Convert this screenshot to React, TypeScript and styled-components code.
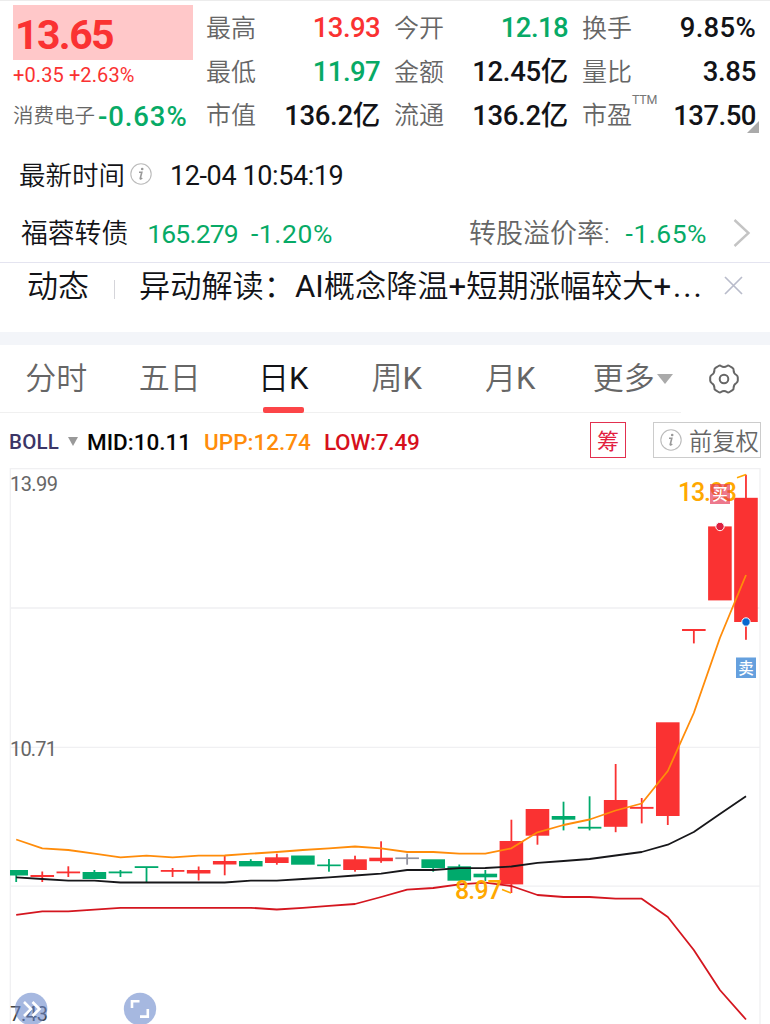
import React from "react";
import styled, { createGlobalStyle } from "styled-components";

const RED = "#fa3232";
const GREEN = "#07aa66";
const INK = "#121317";
const GREY = "#666666";
const ORANGE = "#ffa800";

const GlobalStyle = createGlobalStyle`
  * { box-sizing: border-box; }
  body {
    margin: 0;
    background: #fff;
    color: ${INK};
    font-family: Roboto, "Noto Sans CJK SC", sans-serif;
    overflow: hidden;
  }
  svg { display: block; }
`;

const Page = styled.main`
  width: 770px;
  height: 1024px;
  overflow: hidden;
  background: #fff;
  display: flex;
  flex-direction: column;
`;

const Txt = styled.span<{
  $size: number;
  $color?: string;
  $weight?: number;
  $track?: number;
}>`
  font-size: ${(p) => p.$size}px;
  color: ${(p) => p.$color ?? INK};
  font-weight: ${(p) => p.$weight ?? 400};
  letter-spacing: ${(p) => p.$track ?? 0}px;
  line-height: 1;
  white-space: nowrap;
`;

const Latin = styled.span`
  font-weight: 400;
`;

const Quote = styled.section`
  display: grid;
  grid-template-columns: 180px 550px;
  column-gap: 13px;
  height: 144px;
  flex: none;
  padding: 4px 14px 0 13px;
  border-top: 1px solid #ececec;
`;

const PriceBlock = styled.div`
  display: flex;
  flex-direction: column;
`;

const PriceBox = styled.div`
  height: 55px;
  padding: 5px 0 0 2px;
  display: flex;
  align-items: center;
  background: #ffc8c9;
`;

const ChangeLine = styled.div`
  height: 30px;
  display: flex;
  align-items: center;
`;

const SectorLine = styled.div`
  height: 50px;
  padding-top: 3px;
  display: flex;
  align-items: center;
  gap: 3px;
`;

const Stats = styled.div`
  display: grid;
  grid-template-columns: repeat(3, 174px);
  grid-template-rows: 44px 44px 43px;
  column-gap: 14px;
  padding-top: 1px;
`;

const Stat = styled.div`
  position: relative;
  display: flex;
  align-items: center;
  justify-content: space-between;
`;

const Ttm = styled.sup`
  position: absolute;
  left: 50px;
  top: 0;
  font-size: 12.5px;
  letter-spacing: -0.2px;
  line-height: 1;
  color: #777;
`;

const Corner = styled.i`
  position: absolute;
  right: -3px;
  bottom: 4px;
  border-left: 12px solid transparent;
  border-bottom: 12px solid #aaa;
`;

const TimeRow = styled.section`
  height: 62px;
  flex: none;
  display: flex;
  align-items: center;
  padding: 2px 0 0 19px;
`;

const TimeInfo = styled.div`
  margin: -4px 0 0 5px;
`;

const Stamp = styled.div`
  margin-left: 18px;
  display: flex;
`;

const BondRow = styled.section`
  height: 57px;
  flex: none;
  display: flex;
  align-items: center;
  padding: 1px 19px 0 21px;
  border-bottom: 1px solid #e4e4f0;
`;

const BondQuote = styled.div`
  display: flex;
  gap: 13px;
  margin-left: 19px;
`;

const Premium = styled.div`
  display: flex;
  align-items: center;
  gap: 16px;
  margin-left: auto;
`;

const Chevron = styled.div`
  margin: -4px 0 0 10px;
`;

const News = styled.section`
  height: 69px;
  flex: none;
  display: flex;
  align-items: flex-start;
  padding: 8px 27px 0 27px;
`;

const NewsDivider = styled.i`
  width: 1px;
  height: 19px;
  margin: 9px 24px 0 25px;
  background: #d5d5da;
`;

const Ellipsis = styled.span`
  margin-left: 2px;
  letter-spacing: 2px;
`;

const NewsClose = styled.div`
  margin: 5px 0 0 auto;
`;

const Band = styled.div`
  height: 13px;
  flex: none;
  background: #f3f5f9;
`;

const Tabs = styled.nav`
  height: 68px;
  flex: none;
  display: flex;
`;

const TabList = styled.div`
  width: 681px;
  display: grid;
  grid-template-columns: repeat(6, 113.5px);
  border-bottom: 1px solid #f0f0f0;
`;

const Tab = styled.div<{ $active?: boolean }>`
  position: relative;
  display: flex;
  align-items: center;
  justify-content: center;
  font-size: 31px;
  line-height: 1;
  color: ${(p) => (p.$active ? INK : GREY)};
  font-weight: 350;
  padding: 0 1px 0 0;
  &::after {
    content: "";
    display: ${(p) => (p.$active ? "block" : "none")};
    position: absolute;
    left: 36px;
    bottom: -1px;
    width: 41px;
    height: 6px;
    border-radius: 2px;
    background: #fc4548;
  }
`;

const Caret = styled.i<{ $w: number; $h: number; $color: string }>`
  border: ${(p) => p.$w / 2}px solid transparent;
  border-top: ${(p) => p.$h}px solid ${(p) => p.$color};
  border-bottom: 0;
`;

const TabCaret = styled.div`
  position: absolute;
  left: 89px;
  top: 29px;
  display: flex;
`;

const Settings = styled.div`
  margin: 18px 0 0 27px;
`;

const Indicators = styled.section`
  height: 55px;
  flex: none;
  display: flex;
  align-items: center;
  padding: 0 9px 0 9px;
`;

const IndicatorName = styled.div`
  display: flex;
  padding-top: 3px;
`;

const IndicatorCaret = styled.div`
  display: flex;
  margin: 2px 9px 0 9px;
`;

const Values = styled.div`
  display: flex;
  gap: 13px;
  padding-top: 3px;
`;

const ChipButton = styled.div`
  width: 36px;
  height: 36px;
  margin: -1px 27px 0 auto;
  padding-top: 3px;
  border: 1px solid #e2304f;
  display: flex;
  align-items: center;
  justify-content: center;
`;

const AdjustButton = styled.div`
  width: 108px;
  height: 36px;
  margin-top: -1px;
  border: 1px solid #ccc;
  display: flex;
  align-items: center;
  padding-left: 6px;
  gap: 7px;
`;

const AdjustLabel = styled.div`
  display: flex;
  padding-top: 5px;
`;

const InfoIcon = ({ size }: { size: number }) => (
  <svg width={size} height={size} viewBox="0 0 22 22" fill="none">
    <circle cx="11" cy="11" r="10.2" stroke="#bbb" strokeWidth="1.1" />
    <circle cx="12.2" cy="6" r="1.3" fill="#999" />
    <path d="M9 9.3h2.8l-1.6 6.2q0 .9 2.1-.4" stroke="#999" strokeWidth="1.6" />
  </svg>
);

const stats: { label: string; value: string; color?: string; track: number; ttm?: boolean }[] = [
  { label: "最高", value: "13.93", color: RED, track: -0.6 },
  { label: "今开", value: "12.18", color: GREEN, track: -0.6 },
  { label: "换手", value: "9.85%", track: 0.3 },
  { label: "最低", value: "11.97", color: GREEN, track: -0.6 },
  { label: "金额", value: "12.45亿", track: -0.3 },
  { label: "量比", value: "3.85", track: -0.3 },
  { label: "市值", value: "136.2亿", track: -0.3 },
  { label: "流通", value: "136.2亿", track: -0.3 },
  { label: "市盈", value: "137.50", track: -0.5, ttm: true },
];

type Candle = [string, number, number, number, number];
const G = "#00aa6c";
const R = "#fa3232";
// colour, body top, body bottom, high, low
const candles: Candle[] = [
  [G, 870, 875.5, 870, 882],
  [R, 875, 877, 871.5, 882],
  [R, 871.5, 873.3, 866.3, 877],
  [G, 872, 879, 870, 879],
  [G, 871.5, 873.3, 870, 877],
  [G, 866.2, 868, 867, 882],
  [R, 870, 871.8, 868, 877],
  [R, 870, 873.5, 866.5, 880.5],
  [R, 861, 864.5, 856, 875.3],
  [G, 861, 866.4, 859.2, 866],
  [R, 857.3, 863, 853.7, 864.7],
  [G, 855.5, 864.7, 856, 864],
  [G, 864.5, 866.2, 859, 871.7],
  [R, 859.3, 870, 855.7, 871.7],
  [R, 857.7, 861.2, 841.3, 862.8],
  ["#92929e", 857.4, 859.1, 853.7, 864.7],
  [G, 859.3, 868, 860, 871.7],
  [G, 866.3, 880.7, 864.5, 880],
  [G, 873.7, 877.3, 870, 881],
  [R, 841, 884.4, 819.7, 893],
  [R, 809, 835.7, 809, 844.7],
  [G, 816, 819.7, 801.7, 830.4],
  [G, 826.8, 828.6, 796.3, 830.4],
  [R, 800, 826.8, 764, 832.2],
  [R, 806.9, 808.8, 798, 823.4],
  [R, 722.3, 816, 723, 825],
  [R, 629, 631, 630, 643.4],
  [R, 526.4, 600.4, 527, 600],
  [R, 497.8, 622, 474.7, 639.8],
];

const upper = [839.5, 848.3, 850, 853.7, 857.3, 855.7, 857.3, 855.6, 855.5, 853.7, 852, 850, 848.3, 846.5, 848.3, 852, 852, 853.6, 853.6, 848.3, 832.3, 825, 819.5, 810.5, 803.5, 771, 713, 638, 575];
const middle = [877.3, 879, 880.7, 880.7, 882.5, 882.5, 882.5, 882.5, 882.5, 880.7, 880.7, 879, 877.3, 875.5, 873.7, 870, 870, 868.2, 868, 866.5, 862.8, 861, 859, 855.5, 852, 844.7, 832, 814, 796.3];
const lower = [914.8, 911.3, 911.3, 909.6, 907.8, 907.8, 907.8, 907.8, 907.8, 907.8, 909.5, 907.8, 905.8, 904, 897, 889.6, 888, 884.4, 882.7, 886, 895, 897, 897, 898.7, 898.7, 917, 950, 990, 1019.5];

const xAt = (i: number) => 16.2 + i * 26.063;
const line = (ys: number[]) => ys.map((y, i) => `${xAt(i).toFixed(1)},${y}`).join(" ");

const Chart = () => (
  <svg
    width="770"
    height="556"
    viewBox="0 468 770 556"
    fontFamily='Roboto, "Noto Sans CJK SC", sans-serif'
  >
    <g stroke="#f0f0f2" strokeWidth="1.3" fill="none">
      <path d="M10.3 1024V468.5H760V1024" />
      <path d="M10 608H760M10 747.3H760M10 886.2H760" />
    </g>
    {candles.map(([color, top, bottom, high, low], i) => {
      const x = xAt(i);
      const left = Math.max(10, x - 11.8);
      return (
        <g key={i} fill={color}>
          <rect x={x - 0.9} y={high} width="1.8" height={low - high} />
          <rect x={left} y={top} width={x + 11.8 - left} height={bottom - top} />
        </g>
      );
    })}
    <g fill="none" strokeWidth="1.8" strokeLinejoin="round">
      <polyline points={line(middle)} stroke="#17171a" />
      <polyline points={line(upper)} stroke="#ff8c0a" />
      <polyline points={line(lower)} stroke="#d4161f" />
    </g>
    <g fontSize="20" fill={GREY}>
      <text x="10" y="491" textLength="48">13.99</text>
      <text x="10" y="755.5" textLength="47">10.71</text>
      <text x="10" y="1021" textLength="38" fill="#444">7.43</text>
    </g>
    <g fontSize="25" fontWeight="500" fill={ORANGE}>
      <text x="678" y="501" textLength="59">13.93</text>
      <text x="455" y="898.5" textLength="47">8.97</text>
    </g>
    <g stroke={ORANGE} strokeWidth="1.5" fill="none">
      <path d="M737 477.8L746 474.5" />
      <path d="M502 889.5L511 893" />
    </g>
    <rect x="710" y="484" width="20" height="20" fill="#e4304f" fillOpacity="0.65" />
    <rect x="736" y="657.5" width="20" height="20.5" fill="#65a0de" />
    <g fontSize="15.5" fontWeight="500" fill="#fff" textAnchor="middle">
      <text x="720" y="499.7">买</text>
      <text x="746" y="673.5">卖</text>
    </g>
    <g stroke="#fff" strokeWidth="1">
      <circle cx="720" cy="526.5" r="4.2" fill="#dc2040" />
      <circle cx="746" cy="622" r="4.2" fill="#0868cf" />
    </g>
    <g fill="#6684ca" fillOpacity="0.58">
      <circle cx="31.2" cy="1009" r="16.2" />
      <circle cx="140" cy="1009" r="16.2" />
    </g>
    <g fill="none" stroke="#fff" strokeWidth="2.6">
      <path d="M24 1002L31 1009L24 1016M32.5 1002L39.5 1009L32.5 1016" />
      <path d="M132 1008V1001.2H139.5M147.8 1009V1016.6H140" />
    </g>
  </svg>
);

export default function App() {
  return (
    <Page>
      <GlobalStyle />
      <Quote>
        <PriceBlock>
          <PriceBox>
            <Txt $size={41} $weight={700} $color={RED} $track={-1.6}>13.65</Txt>
          </PriceBox>
          <ChangeLine>
            <Txt $size={20} $color={RED} $track={0.1}>+0.35 +2.63%</Txt>
          </ChangeLine>
          <SectorLine>
            <Txt $size={20.5} $color={GREY} $weight={350}>消费电子</Txt>
            <Txt $size={27.5} $color={GREEN} $weight={500} $track={0.9}>-0.63%</Txt>
          </SectorLine>
        </PriceBlock>
        <Stats>
          {stats.map((s) => (
            <Stat key={s.label}>
              <Txt $size={25} $color={GREY} $weight={350}>{s.label}</Txt>
              {s.ttm && <Ttm>TTM</Ttm>}
              <Txt $size={27.5} $color={s.color} $weight={500} $track={s.track}>{s.value}</Txt>
              {s.ttm && <Corner />}
            </Stat>
          ))}
        </Stats>
      </Quote>
      <TimeRow>
        <Txt $size={26.5} $weight={350}>最新时间</Txt>
        <TimeInfo>
          <InfoIcon size={22} />
        </TimeInfo>
        <Stamp>
          <Txt $size={27} $track={-0.4}>12-04 10:54:19</Txt>
        </Stamp>
      </TimeRow>
      <BondRow>
        <Txt $size={26.8} $weight={350}>福蓉转债</Txt>
        <BondQuote>
          <Txt $size={26.5} $color={GREEN} $track={-0.8}>165.279</Txt>
          <Txt $size={26.5} $color={GREEN} $track={0.6}>-1.20%</Txt>
        </BondQuote>
        <Premium>
          <Txt $size={27} $color={GREY} $weight={350}>转股溢价率:</Txt>
          <Txt $size={26.5} $color={GREEN} $track={0.5}>-1.65%</Txt>
          <Chevron>
            <svg width="18" height="30" viewBox="0 0 18 30" fill="none">
              <path d="M1.5 2L15.5 15L1.5 28" stroke="#c4c4c4" strokeWidth="2.4" />
            </svg>
          </Chevron>
        </Premium>
      </BondRow>
      <News>
        <Txt $size={31} $weight={350}>动态</Txt>
        <NewsDivider />
        <Txt $size={31.2} $weight={350}>
          异动解读：<Latin>AI</Latin>概念降温<Latin>+</Latin>短期涨幅较大
          <Latin>
            +<Ellipsis>...</Ellipsis>
          </Latin>
        </Txt>
        <NewsClose>
          <svg width="19" height="19" viewBox="0 0 19 19">
            <path d="M1 1L18 18M18 1L1 18" stroke="#b9bccb" strokeWidth="1.7" />
          </svg>
        </NewsClose>
      </News>
      <Band />
      <Tabs>
        <TabList>
          <Tab>分时</Tab>
          <Tab>五日</Tab>
          <Tab $active>日<Latin>K</Latin></Tab>
          <Tab>周<Latin>K</Latin></Tab>
          <Tab>月<Latin>K</Latin></Tab>
          <Tab>
            更多
            <TabCaret>
              <Caret $w={16} $h={10} $color="#aaa" />
            </TabCaret>
          </Tab>
        </TabList>
        <Settings>
          <svg width="32" height="32" viewBox="0 0 32 32" fill="none" stroke="#666" strokeWidth="2">
            <path
              strokeLinejoin="round"
              d="M10.5 3Q12 2 13 3Q16 5 19 3Q20 2 21.5 3L24.5 4.8Q25.8 5.6 25.6 7.2Q25.6 10.4 28.4 12Q29.8 13 29.8 14.4V17.6Q29.8 19 28.4 20Q25.6 21.6 25.6 24.8Q25.8 26.4 24.5 27.2L21.5 29Q20 30 19 29Q16 27 13 29Q12 30 10.5 29L7.5 27.2Q6.2 26.4 6.4 24.8Q6.4 21.6 3.6 20Q2.2 19 2.2 17.6V14.4Q2.2 13 3.6 12Q6.4 10.4 6.4 7.2Q6.2 5.6 7.5 4.8Z"
            />
            <circle cx="16" cy="16" r="4.3" />
          </svg>
        </Settings>
      </Tabs>
      <Indicators>
        <IndicatorName>
          <Txt $size={20.5} $color="#3b3566" $weight={500} $track={0.2}>BOLL</Txt>
        </IndicatorName>
        <IndicatorCaret>
          <Caret $w={10} $h={9} $color="#999" />
        </IndicatorCaret>
        <Values>
          <Txt $size={22.5} $color="#050505" $weight={500}>MID:10.11</Txt>
          <Txt $size={22.5} $color="#ff8c0a" $weight={500}>UPP:12.74</Txt>
          <Txt $size={22.5} $color="#d6101c" $weight={500} $track={-0.2}>LOW:7.49</Txt>
        </Values>
        <ChipButton>
          <Txt $size={22} $color="#e2203f">筹</Txt>
        </ChipButton>
        <AdjustButton>
          <InfoIcon size={22} />
          <AdjustLabel>
            <Txt $size={23.3} $color={GREY} $weight={350}>前复权</Txt>
          </AdjustLabel>
        </AdjustButton>
      </Indicators>
      <Chart />
    </Page>
  );
}
